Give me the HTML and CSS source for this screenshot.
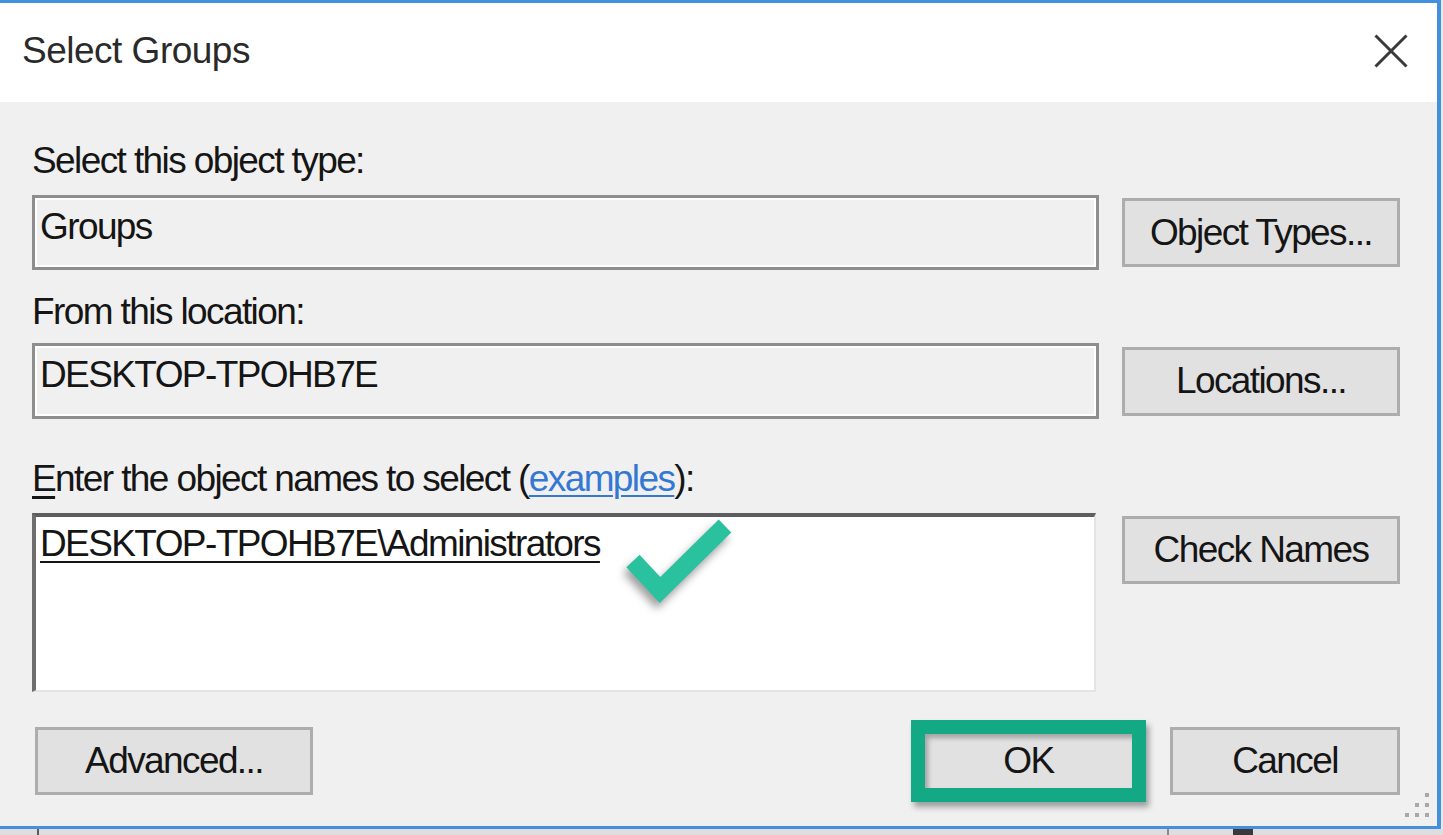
FILE: index.html
```html
<!DOCTYPE html>
<html lang="en">
<head>
<meta charset="utf-8">
<title>Select Groups</title>
<link rel="stylesheet" href="styles.css">
</head>
<body>
<div class="window">
  <div class="titlebar">
    <span class="title">Select Groups</span>
    <span class="close" aria-label="Close">
      <svg width="34" height="34" viewBox="0 0 34 34"><path d="M1.5 1.5 L32.5 32.5 M32.5 1.5 L1.5 32.5" stroke="#3a3a3a" stroke-width="3" fill="none"/></svg>
    </span>
  </div>
  <div class="body">
    <div class="label l1">Select this object type:</div>
    <div class="row r1">
      <div class="field">Groups</div>
      <div class="btn">Object Types...</div>
    </div>
    <div class="label l2">From this location:</div>
    <div class="row r2">
      <div class="field f2">DESKTOP-TPOHB7E</div>
      <div class="btn">Locations...</div>
    </div>
    <div class="label l3"><span class="acc">E</span>nter the object names to select (<span class="link">examples</span>):</div>
    <div class="row r3">
      <div class="names">
        <span class="resolved">DESKTOP-TPOHB7E\Administrators</span>
        <svg class="check" width="170" height="110" viewBox="0 0 170 110"><path d="M21 48 L48 77 L113 13" stroke="#2ac29e" stroke-width="18" fill="none" stroke-linejoin="miter" stroke-linecap="butt"/></svg>
      </div>
      <div class="btn top">Check Names</div>
    </div>
    <div class="footer">
      <div class="btn adv">Advanced...</div>
      <div class="spacer"></div>
      <div class="okframe"><div class="okbtn">OK</div></div>
      <div class="btn cancel">Cancel</div>
    </div>
    <svg class="grip" width="24" height="24" viewBox="0 0 24 24">
      <rect x="20" y="0" width="4" height="4" fill="#a8a8a8"/>
      <rect x="10" y="10" width="4" height="4" fill="#a8a8a8"/>
      <rect x="20" y="10" width="4" height="4" fill="#a8a8a8"/>
      <rect x="0" y="20" width="4" height="4" fill="#a8a8a8"/>
      <rect x="10" y="20" width="4" height="4" fill="#a8a8a8"/>
      <rect x="20" y="20" width="4" height="4" fill="#a8a8a8"/>
    </svg>
  </div>
</div>
<div class="strip"></div>
</body>
</html>
```

FILE: styles.css
```css
html, body {
  margin: 0;
  padding: 0;
}
body {
  width: 1443px;
  height: 835px;
  overflow: hidden;
  background: #e8e8e8;
  font-family: "Liberation Sans", Arial, sans-serif;
  color: #151515;
}
.window {
  width: 1437px;
  border-top: 3px solid #4390de;
  border-right: 4px solid #4390de;
  border-bottom: 3px solid #4390de;
  background: #f0f0f0;
}
.titlebar {
  height: 99px;
  box-sizing: border-box;
  background: #ffffff;
  display: flex;
  align-items: center;
  justify-content: space-between;
  padding: 0 29px 3px 22px;
}
.title {
  font-size: 37px;
  line-height: 40px;
  letter-spacing: -0.5px;
  color: #2a2a2a;
}
.close {
  display: flex;
  width: 34px;
  height: 34px;
}
.body {
  position: relative;
  height: 724px;
  box-sizing: border-box;
  padding: 39px 37px 0 32px;
  display: flex;
  flex-direction: column;
}
.label {
  font-size: 37px;
  line-height: 40px;
  letter-spacing: -1.6px;
  white-space: nowrap;
}
.l2 { margin-top: 22px; }
.l3 { margin-top: 40px; }
.acc {
  text-decoration: underline;
  text-decoration-thickness: 3px;
  text-underline-offset: 5px;
}
.link {
  color: #3478d4;
  text-decoration: underline;
  text-decoration-thickness: 2px;
  text-underline-offset: 4px;
}
.row {
  display: flex;
  align-items: center;
  gap: 23px;
}
.r1 { margin-top: 14px; }
.r2 { margin-top: 11px; }
.r3 { margin-top: 14px; align-items: flex-start; }
.field {
  width: 1067px;
  height: 75px;
  box-sizing: border-box;
  border: 3px solid #8e8e8e;
  box-shadow: inset 0 0 0 2px #ffffff;
  padding: 9px 5px;
  font-size: 37px;
  line-height: 40px;
  letter-spacing: -1.6px;
  background: #f0f0f0;
  white-space: nowrap;
}
.f2 { height: 76px; }
.btn {
  width: 278px;
  height: 69px;
  box-sizing: border-box;
  border: 3px solid #adadad;
  background: #e1e1e1;
  display: flex;
  align-items: center;
  justify-content: center;
  font-size: 37px;
  line-height: 40px;
  letter-spacing: -1.6px;
  white-space: nowrap;
}
.btn.top {
  margin-top: 3px;
  height: 68px;
}
.names {
  position: relative;
  width: 1064px;
  height: 179px;
  margin-right: 3px;
  box-sizing: border-box;
  background: #ffffff;
  border-top: 4px solid #5e5e5e;
  border-left: 4px solid #6e6e6e;
  border-right: 2px solid #e4e4e4;
  border-bottom: 2px solid #e4e4e4;
  padding: 7px 4px;
  font-size: 37px;
  line-height: 40px;
  letter-spacing: -1.6px;
  white-space: nowrap;
}
.resolved {
  text-decoration: underline;
  text-decoration-thickness: 2px;
  text-underline-offset: 5px;
}
.check {
  position: absolute;
  left: 576px;
  top: -4px;
  filter: drop-shadow(-3px 6px 4px rgba(0, 0, 0, 0.38));
}
.footer {
  margin-top: 28px;
  display: flex;
  align-items: center;
  gap: 24px;
}
.btn.adv {
  margin-left: 3px;
  height: 68px;
}
.spacer { flex: 1; }
.okframe {
  width: 235px;
  height: 82px;
  box-sizing: border-box;
  border: 14px solid #14a985;
  box-shadow: 3px 5px 6px rgba(0, 0, 0, 0.35);
}
.okbtn {
  height: 100%;
  background: #e1e1e1;
  box-shadow: inset 3px 4px 5px rgba(0, 0, 0, 0.28);
  display: flex;
  align-items: center;
  justify-content: center;
  font-size: 37px;
  line-height: 40px;
  letter-spacing: -1.6px;
}
.btn.cancel {
  width: 230px;
  height: 68px;
}
.grip {
  position: absolute;
  right: 8px;
  bottom: 9px;
}
.strip {
  height: 6px;
  background:
    linear-gradient(90deg, transparent 37px, #5a5a5a 37px, #5a5a5a 39px, transparent 39px,
      transparent 1167px, #8a8a8a 1167px, #8a8a8a 1169px, transparent 1169px,
      transparent 1233px, #3a3a3a 1233px, #3a3a3a 1253px, transparent 1253px),
    #dedede;
}
```
